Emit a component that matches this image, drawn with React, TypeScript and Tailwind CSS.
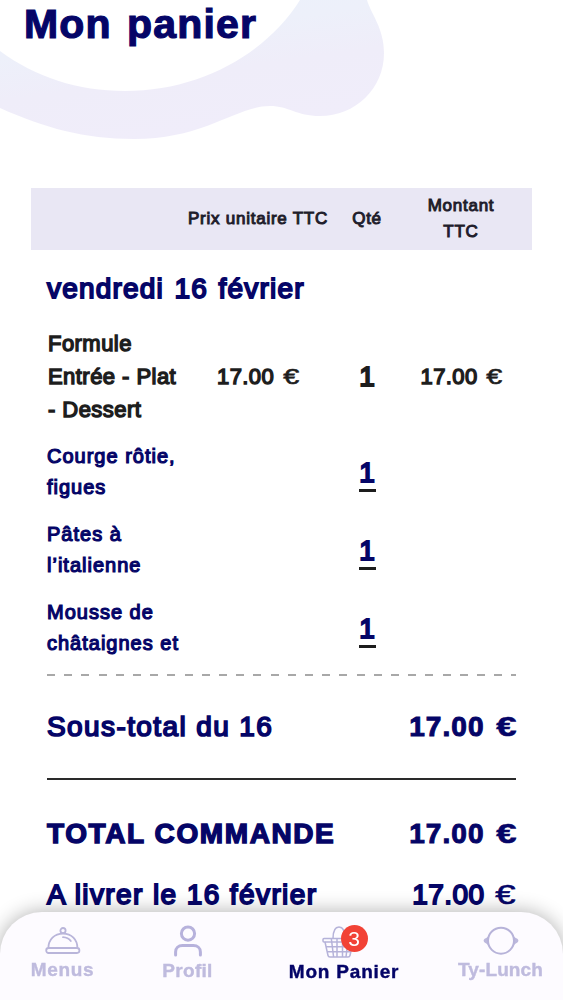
import clsx from "clsx";
import { ReactNode } from "react";

interface CartItem {
  lines: string[];
  quantity: number;
}

const items: CartItem[] = [
  { lines: ["Courge rôtie,", "figues"], quantity: 1 },
  { lines: ["Pâtes à", "l’italienne"], quantity: 1 },
  { lines: ["Mousse de", "châtaignes et"], quantity: 1 },
];

const Blob = () => (
  <svg
    className="absolute left-0 top-0"
    width="400"
    height="150"
    viewBox="0 0 400 150"
  >
    <defs>
      <linearGradient id="blob" gradientUnits="userSpaceOnUse" x1="180" y1="-10" x2="200" y2="130">
        <stop offset="0" stopColor="#ecf1fa" />
        <stop offset="0.3" stopColor="#edf0fa" />
        <stop offset="0.6" stopColor="#efedf9" />
        <stop offset="1" stopColor="#f0edfa" />
      </linearGradient>
    </defs>
    <path
      d="M0 51C35 77 78 91 125 91C200 91 266 54 300 0H367C371 14 384 28 384 53C384 89 355 116 320 116C296 116 289 106 270 106C236 106 205 139 134 139C84 139 45 128 0 108Z"
      fill="url(#blob)"
    />
  </svg>
);

const MenusIcon = () => (
  <svg
    width="36"
    height="28"
    viewBox="0 0 36 28"
    fill="none"
    stroke="#b9b5da"
    strokeWidth="1.8"
    strokeLinecap="round"
  >
    <circle cx="18" cy="3.6" r="2.6" />
    <path d="M3.4 21C3.4 12.5 9.4 6.6 18 6.6S32.4 12.5 32.4 21" />
    <rect x="1.2" y="21" width="33.2" height="5" rx="2.4" />
    <path d="M18 10.2C21.5 10.4 24 11.6 25.8 14" />
  </svg>
);

const ProfilIcon = () => (
  <svg
    width="30"
    height="32"
    viewBox="0 0 30 32"
    fill="none"
    stroke="#b7b2dc"
    strokeWidth="3"
    strokeLinecap="round"
  >
    <circle cx="15" cy="8.6" r="6.6" />
    <path d="M2.6 30V27C2.6 23 5.4 20.6 9.4 20.6H20.4C24.4 20.6 27.4 23 27.4 27V30" />
  </svg>
);

const BasketIcon = () => (
  <svg
    width="34"
    height="32"
    viewBox="0 0 34 32"
    fill="none"
    stroke="#b5b2d9"
    strokeWidth="1.5"
    strokeLinejoin="round"
  >
    <path d="M11 12.5C11 5 13.5 1 17 1S23 5 23 12.5" />
    <rect x="1" y="12.5" width="32" height="3.4" rx="1" />
    <path d="M3 16L6 29.5Q6.3 31 8 31H26Q27.7 31 28 29.5L31 16" />
    <path d="M4 20.8H30M5.3 25.8H28.7M9.3 12.5L11.6 31M15 12.5V31M20.5 12.5V31M26.3 12.5L24 31" />
  </svg>
);

const TyLunchIcon = () => (
  <svg width="36" height="30" viewBox="0 0 36 30" fill="none">
    <path
      d="M6.6 8C5.4 10.6 4 11.6 1.6 12.8Q-0.4 14.6 1.6 16.4C4 17.6 5.4 18.8 6.6 21.4ZM29.4 8C30.6 10.6 32 11.6 34.4 12.8Q36.4 14.6 34.4 16.4C32 17.6 30.6 18.8 29.4 21.4Z"
      fill="#bcb8dc"
    />
    <circle cx="18" cy="14.7" r="13" fill="#fdfbff" stroke="#b7b3d9" strokeWidth="2" />
  </svg>
);

interface PriceProps {
  amount: string;
  className?: string;
}

const Price = ({ amount, className }: PriceProps) => (
  <span className={clsx("whitespace-nowrap", className)}>
    {amount}{" "}
    <span className="ml-[0.28em] inline-block origin-right scale-x-[1.3] tracking-normal [-webkit-text-stroke:0.6px]">
      €
    </span>
  </span>
);

interface NavItemProps {
  label: string;
  icon: ReactNode;
  className: string;
  active?: boolean;
}

const NavItem = ({ label, icon, className, active }: NavItemProps) => (
  <a
    className={clsx(
      "flex flex-col items-center whitespace-nowrap text-[19px] font-bold leading-6 [-webkit-text-stroke:0.4px]",
      active ? "text-[#040468]" : "text-[#bfbbde]",
      className
    )}
  >
    {icon}
    <span>{label}</span>
  </a>
);

const BottomNav = () => (
  <nav className="fixed bottom-0 left-0 flex h-[88px] w-full rounded-t-[42px] bg-[#fdfbff] shadow-[0_0_20px_rgba(0,0,0,0.32)]">
    <NavItem
      label="Menus"
      className="w-[125px] gap-[3px] pt-[15px] tracking-[0.7px]"
      icon={<MenusIcon />}
    />
    <NavItem
      label="Profil"
      className="w-[125px] gap-[2px] pt-[16px] tracking-[0.3px] [&>svg]:-mt-[3px]"
      icon={<ProfilIcon />}
    />
    <NavItem
      label="Mon Panier"
      active
      className="w-[188px] pt-[14px] tracking-[0.8px]"
      icon={
        <div className="relative mr-[11px] h-[34px]">
          <BasketIcon />
          <span className="absolute -top-[1px] left-[19px] flex size-[27px] items-center justify-center rounded-full bg-[#f24236] text-[21px] font-normal tracking-normal text-white [-webkit-text-stroke:0]">
            3
          </span>
        </div>
      }
    />
    <NavItem
      label="Ty-Lunch"
      className="w-[125px] gap-[2px] pt-[14px] tracking-[0.1px]"
      icon={<TyLunchIcon />}
    />
  </nav>
);

export default function App() {
  return (
    <div className="relative h-[1000px] w-full overflow-hidden bg-white font-['Liberation_Sans',Arial,sans-serif] text-[#050567]">
      <Blob />
      <h1 className="relative h-[187px] pl-[24px] text-[41px] font-bold leading-[49px] tracking-[1.2px] [word-spacing:2.5px] [-webkit-text-stroke:1.2px]">
        Mon panier
      </h1>

      <main className="ml-[31px] w-[501px] pt-[0.5px]">
        <div className="grid h-[62px] grid-cols-[157px_140px_78px_110px] items-center bg-[#e9e7f4] text-center text-[17px] leading-[26px] tracking-[0.75px] text-[#1f1d2b] [-webkit-text-stroke:1px]">
          <span />
          <span className="whitespace-nowrap">Prix unitaire TTC</span>
          <span>Qté</span>
          <span>
            Montant
            <br />
            TTC
          </span>
        </div>

        <h2 className="h-[79px] pl-4 text-[28px] leading-[77px] tracking-[1.2px] [word-spacing:1.5px] [-webkit-text-stroke:1.8px]">
          vendredi 16 février
        </h2>

        <div className="-mt-[2px] grid h-[99px] grid-cols-[157px_140px_78px_110px] items-center text-center text-[22px] leading-[33px] text-[#1d1d1d] [-webkit-text-stroke:1.4px]">
          <p className="pl-[17px] text-left tracking-[0.45px]">
            Formule
            <br />
            Entrée - Plat
            <br />- Dessert
          </p>
          <Price amount="17.00" className="tracking-[0.4px]" />
          <span className="text-[28px] [-webkit-text-stroke:2px]">1</span>
          <Price amount="17.00" className="pl-px tracking-[0.4px]" />
        </div>

        <ul className="pt-[7.5px]">
          {items.map((item) => (
            <li
              key={item.lines[0]}
              className="grid h-[78px] grid-cols-[157px_140px_78px] items-center"
            >
              <p className="pl-4 text-[20px] leading-[31.5px] tracking-[1px] [-webkit-text-stroke:1.2px]">
                {item.lines[0]}
                <br />
                {item.lines[1]}
              </p>
              <span />
              <span className="mt-[3px] w-[17px] justify-self-center border-b-[3px] border-[#1d1d1d] text-center text-[28px] leading-[33px] [-webkit-text-stroke:2px]">
                {item.quantity}
              </span>
            </li>
          ))}
        </ul>

        <div className="mx-4 mt-[6.5px] h-[2px] bg-[repeating-linear-gradient(to_right,#a8a8a8_0_8px,transparent_8px_17.2px)]" />

        <div className="mx-4 flex h-[104px] items-center justify-between border-b-2 border-[#2a2a2a] text-[28px]">
          <span className="tracking-[1.4px] [-webkit-text-stroke:1.7px]">
            Sous-total du 16
          </span>
          <Price
            amount="17.00"
            className="-mr-px font-bold tracking-[1.1px] [-webkit-text-stroke:1px]"
          />
        </div>

        <div className="mx-4 mt-[24px] flex h-[61px] items-center justify-between text-[28px] font-bold [-webkit-text-stroke:1.4px]">
          <span className="tracking-[1.6px]">TOTAL COMMANDE</span>
          <Price
            amount="17.00"
            className="-mr-px tracking-[1.1px] [-webkit-text-stroke:1px]"
          />
        </div>
        <div className="mx-4 flex h-[61px] items-center justify-between text-[28px] [-webkit-text-stroke:1.8px]">
          <span className="tracking-[1.4px]">A livrer le 16 février</span>
          <Price amount="17.00" className="tracking-[0.4px]" />
        </div>
      </main>

      <BottomNav />
    </div>
  );
}
